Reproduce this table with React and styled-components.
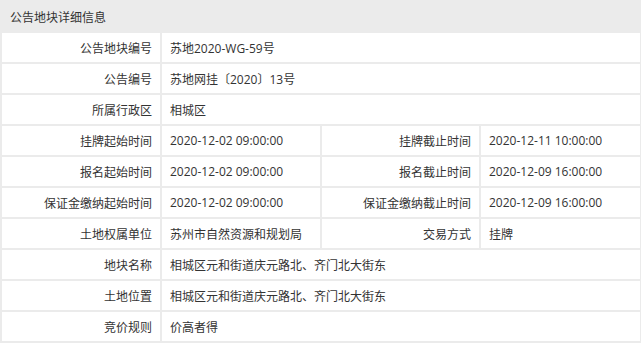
import React from 'react';
import styled, { createGlobalStyle } from 'styled-components';

const GlobalStyle = createGlobalStyle`
    body {
        margin: 0;
        background: #ffffff;
        font-family: "Open Sans", "Noto Sans CJK SC", sans-serif;
    }
`

const rows = [
    [['公告地块编号', '苏地2020-WG-59号']],
    [['公告编号', '苏地网挂〔2020〕13号']],
    [['所属行政区', '相城区']],
    [['挂牌起始时间', '2020-12-02 09:00:00'], ['挂牌截止时间', '2020-12-11 10:00:00']],
    [['报名起始时间', '2020-12-02 09:00:00'], ['报名截止时间', '2020-12-09 16:00:00']],
    [['保证金缴纳起始时间', '2020-12-02 09:00:00'], ['保证金缴纳截止时间', '2020-12-09 16:00:00']],
    [['土地权属单位', '苏州市自然资源和规划局'], ['交易方式', '挂牌']],
    [['地块名称', '相城区元和街道庆元路北、齐门北大街东']],
    [['土地位置', '相城区元和街道庆元路北、齐门北大街东']],
    [['竞价规则', '价高者得']],
]

const App = () => {
    return (
        <>
            <GlobalStyle />
            <Table>
                <colgroup>
                    <col width="160" />
                    <col width="160" />
                    <col width="159" />
                    <col width="161" />
                </colgroup>
                <tbody>
                    <tr>
                        <HeadCell colSpan={4}>公告地块详细信息</HeadCell>
                    </tr>
                    {rows.map((pairs, i) => (
                        <tr key={i}>
                            {pairs.map(([label, value]) => (
                                <React.Fragment key={label}>
                                    <LabelCell>{label}</LabelCell>
                                    <ValueCell colSpan={pairs.length === 1 ? 3 : 1}>{value}</ValueCell>
                                </React.Fragment>
                            ))}
                        </tr>
                    ))}
                </tbody>
            </Table>
        </>
    )
}

export default App

const Table = styled.table`
    width: 640px;
    border-collapse: collapse;
    table-layout: fixed;
    font-size: 12px;
    color: #333333;
`
const Cell = styled.td`
    height: 29px;
    padding: 0 8px;
    border: 2px solid #ebebeb;
    white-space: nowrap;
    overflow: hidden;
`
const HeadCell = styled(Cell)`
    background: #ebebeb;
    text-align: left;
`
const LabelCell = styled(Cell)`
    text-align: right;
`
const ValueCell = styled(Cell)`
    text-align: left;
`
